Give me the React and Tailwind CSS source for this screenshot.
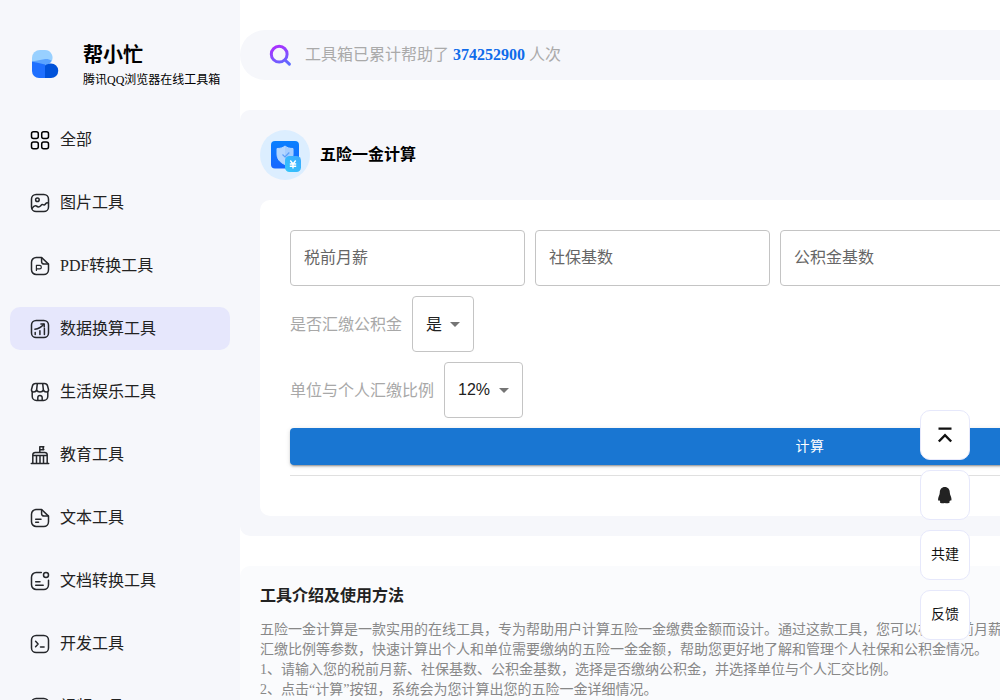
import React from "react";

const stroke = {
  width: 20,
  height: 20,
  viewBox: "0 0 20 20",
  fill: "none",
  stroke: "#25272b",
  strokeWidth: 1.5,
  strokeLinecap: "round",
  strokeLinejoin: "round",
};

const icons = {
  all: (
    <svg {...stroke} stroke="#000">
      <rect x="1.500" y="1.800" width="6.800" height="6.800" rx="2" />
      <rect x="11.700" y="1.800" width="6.800" height="6.800" rx="2" />
      <rect x="1.500" y="12" width="6.800" height="6.800" rx="2" />
      <rect x="11.700" y="12" width="6.800" height="6.800" rx="2" />
    </svg>
  ),
  image: (
    <svg {...stroke}>
      <rect x="1.500" y="1.500" width="17" height="17" rx="4.600" />
      <circle cx="7.400" cy="6.700" r="1.800" />
      <path d="M2 15.500c1.500-2.300 2.900-3.200 4.200-2.600 1.500 1.300 3 1.600 4.500-.1 1-1.600 1.900-1.600 2.900-.9 1 .4 1.400-.3 2-1.100.7-.9 1.700-1.200 2.800-.7" />
    </svg>
  ),
  pdf: (
    <svg {...stroke}>
      <path d="M11.600 1.500H6.200a4.700 4.700 0 0 0-4.700 4.700v7.600a4.700 4.700 0 0 0 4.700 4.700h7.600a4.700 4.700 0 0 0 4.700-4.700V8.100z" />
      <path d="M11.600 1.800v3.900a2.400 2.400 0 0 0 2.400 2.400h4.200" />
      <path d="M6.400 14.500V9.400h3.200a1.750 1.750 0 0 1 0 3.500H6.500" strokeWidth="1.200" />
    </svg>
  ),
  data: (
    <svg {...stroke}>
      <rect x="1.500" y="1.500" width="17" height="17" rx="4.600" />
      <path d="M5.200 15.500v-2M9.900 15.500v-3.700M14.400 15.500V9.400M4.900 10.200c3.800-.3 6.300-2 8.800-5" />
      <path d="M10.900 5h3.300v3" />
    </svg>
  ),
  life: (
    <svg {...stroke}>
      <path d="M2.200 9.500v4.700a4.300 4.300 0 0 0 4.300 4.300h7a4.300 4.300 0 0 0 4.300-4.300V9.500" />
      <path d="M5.500 1.500h9c1.500 0 2.600.8 3 2.300l1 3.700c.3 1.600-.7 2.500-2.200 2.500-1.400 0-2.400-.7-2.900-1.900-.6 1.200-1.700 1.900-3.400 1.900s-2.800-.7-3.400-1.900C6.100 9.300 5.100 10 3.700 10c-1.500 0-2.500-.9-2.200-2.500l1-3.700c.4-1.500 1.500-2.300 3-2.300z" />
      <path d="m7.300 1.700-.7 6.400M12.700 1.700l.7 6.400M7.800 18.200v-2.500a2.200 2.200 0 0 1 4.400 0v2.500" />
    </svg>
  ),
  education: (
    <svg {...stroke}>
      <path d="M1.300 18.500h17.400M2.800 18V9.800a2.400 2.400 0 0 1 2.400-2.400h9.600a2.400 2.400 0 0 1 2.400 2.400V18M3 10.500h14M6.500 10.500v7.700M10 10.500v7.700M13.500 10.500v7.700" />
      <path d="M9.800 7V1.700h4l-.8 1.500.8 1.500H10" />
    </svg>
  ),
  text: (
    <svg {...stroke}>
      <path d="M11.600 1.500H6.200a4.700 4.700 0 0 0-4.700 4.700v7.600a4.700 4.700 0 0 0 4.700 4.700h7.600a4.700 4.700 0 0 0 4.700-4.700V8.100z" />
      <path d="M11.600 1.800v3.900a2.400 2.400 0 0 0 2.400 2.400h4.200M5.700 11.200H11M5.700 14.300h2.800" />
    </svg>
  ),
  document: (
    <svg {...stroke}>
      <path d="M11.300 1.500H6.200a4.700 4.700 0 0 0-4.700 4.700v7.600a4.700 4.700 0 0 0 4.700 4.700h7.600a4.700 4.700 0 0 0 4.700-4.700V9.200" />
      <circle cx="16" cy="4" r="2.500" />
      <path d="M5.700 10.700H10M5.700 14.200h7.500" />
    </svg>
  ),
  dev: (
    <svg {...stroke}>
      <rect x="1.500" y="1.500" width="17" height="17" rx="4.600" />
      <path d="m5.600 7.300 2.500 2.700-2.500 2.700M10.500 12.900h3.600" />
    </svg>
  ),
  video: (
    <svg {...stroke}>
      <rect x="1.500" y="1.500" width="17" height="17" rx="4.600" />
      <path d="m8 7 5 3-5 3z" />
    </svg>
  ),
};

const menu = [
  ["all", "全部"],
  ["image", "图片工具"],
  ["pdf", "PDF转换工具"],
  ["data", "数据换算工具"],
  ["life", "生活娱乐工具"],
  ["education", "教育工具"],
  ["text", "文本工具"],
  ["document", "文档转换工具"],
  ["dev", "开发工具"],
  ["video", "视频工具"],
];

function Logo() {
  return (
    <svg width="28" height="30" viewBox="0 0 28 30">
      <path d="M1 13V9a8 8 0 0 1 8-8h5a7.600 7.600 0 0 1 6 12.200L14 16z" fill="#98d0ff" />
      <path d="M1 12.600 13 10.200c3-.5 5.400 0 7.600 1.600-1.200 2.200-3 3.200-6.600 5.200z" fill="#5ba4ff" />
      <path d="M1 12.600 14 15.500V29H8a7 7 0 0 1-7-7z" fill="#1f70ff" />
      <path d="M14 16.500c2-1.500 4-2 6-2a7.200 7.200 0 0 1 0 14.500h-6z" fill="#0052d9" />
    </svg>
  );
}

function Sidebar() {
  return (
    <aside className="flex h-[700px] w-60 shrink-0 flex-col overflow-hidden bg-[#f6f7fb]">
      <div className="flex h-[118px] shrink-0 pl-[31px] pt-10">
        <div className="w-[52px] pt-[9px]">
          <Logo />
        </div>
        <div className="whitespace-nowrap pt-px text-black">
          <div className="text-[20px] font-bold leading-[29px]">帮小忙</div>
          <div className="text-[12px] leading-[20px]">腾讯QQ浏览器在线工具箱</div>
        </div>
      </div>
      <nav className="flex flex-col gap-5 px-2.5">
        {menu.map(([key, label]) => (
          <div
            key={key}
            className={
              "flex h-[43px] shrink-0 items-center gap-2.5 rounded-[10px] pl-5 text-[16px] text-[#222] " +
              (key === "data" ? "bg-[#e6e7fc]" : "")
            }
          >
            <span className="flex h-[21px] items-end">{icons[key]}</span>
            <span className="leading-6">{label}</span>
          </div>
        ))}
      </nav>
    </aside>
  );
}

function SearchBar() {
  return (
    <div className="flex h-[50px] items-center rounded-full bg-[#f6f7fb] pl-[29px] text-[16px] text-[#aaa]">
      <svg width="24" height="24" viewBox="0 0 24 24" fill="none">
        <defs>
          <linearGradient id="lens" x1="8" y1="1" x2="16" y2="23" gradientUnits="userSpaceOnUse">
            <stop stopColor="#b02cff" />
            <stop offset="1" stopColor="#5b6cff" />
          </linearGradient>
        </defs>
        <circle cx="10.200" cy="11.200" r="7.900" stroke="url(#lens)" strokeWidth="3" />
        <path d="m16 17 4.400 4.200" stroke="url(#lens)" strokeWidth="3" strokeLinecap="round" />
      </svg>
      <div className="ml-3 whitespace-nowrap">
        工具箱已累计帮助了 <b className="font-bold text-[#0f6bea]">374252900</b> 人次
      </div>
    </div>
  );
}

function ToolIcon() {
  return (
    <svg width="50" height="50" viewBox="0 0 50 50">
      <defs>
        <linearGradient id="tile" x1="0" y1="0" x2="0" y2="1">
          <stop stopColor="#0a80ff" />
          <stop offset="1" stopColor="#1766ff" />
        </linearGradient>
        <linearGradient id="coin" x1="1" y1="0" x2="0" y2="1">
          <stop stopColor="#3aa8ff" />
          <stop offset="1" stopColor="#35c7fa" />
        </linearGradient>
      </defs>
      <circle cx="25" cy="25" r="25" fill="#dceeff" />
      <rect x="11" y="11" width="28" height="27.500" rx="4" fill="url(#tile)" />
      <path d="M25 16c2 1.700 4.500 2.500 8 2.500v5.500c0 5-3 8.500-8 10.500-5-2-8-5.500-8-10.500v-5.500c3.500 0 6-.8 8-2.500z" fill="#b5d7ff" stroke="#b5d7ff" strokeLinejoin="round" />
      <path d="M25 16c2 1.700 4.500 2.500 8 2.500v5.500c0 5-3 8.500-8 10.500z" fill="#a4cdff" />
      <path d="m22.500 24.500 2.500 2.500 4.300-4.500" fill="none" stroke="#5c9ff8" strokeWidth="1.200" />
      <rect x="25" y="26" width="16" height="16" rx="4.500" fill="url(#coin)" />
      <path d="m30.300 30.500 2.700 3.500 2.700-3.500M29.800 34h6.400M29.800 36.300h6.400M33 34v4.500" fill="none" stroke="#fff" strokeWidth="1.400" />
    </svg>
  );
}

function Select({ value, width, textClass = "" }) {
  return (
    <div className={"flex h-14 items-center rounded-[4px] border border-[#c4c4c4] pl-[13px] font-['Liberation_Sans','Noto_Sans_CJK_SC',sans-serif] text-[16px] text-[#212121] " + width}>
      <span className={"leading-6 " + textClass}>{value}</span>
      <svg className="ml-auto mr-[6px]" width="24" height="24" viewBox="0 0 24 24">
        <path d="m7 10 5 5 5-5z" fill="#757575" />
      </svg>
    </div>
  );
}

function Calculator() {
  return (
    <section className="mt-[30px] rounded-[10px] bg-[#f6f7fb] p-5">
      <div className="flex h-[50px] items-center gap-2.5">
        <ToolIcon />
        <h1 className="text-[16px] font-bold text-black">五险一金计算</h1>
      </div>
      <div className="mt-5 flex h-[316px] flex-col gap-2.5 rounded-[10px] bg-white p-[30px]">
        <div className="flex gap-2.5">
          {["税前月薪", "社保基数", "公积金基数"].map((label) => (
            <div
              key={label}
              className="flex h-14 w-[235px] items-center rounded-[4px] border border-[#c4c4c4] pl-[13px] text-[16px] text-[#666]"
            >
              <span className="leading-6">{label}</span>
            </div>
          ))}
        </div>
        <div className="flex items-center gap-2.5 text-[16px] text-[#a8a8a8]">
          <span className="pt-0.5">是否汇缴公积金</span>
          <Select value="是" width="w-[62px]" textClass="pt-0.5" />
        </div>
        <div className="flex items-center gap-2.5 text-[16px] text-[#a8a8a8]">
          <span className="pt-0.5">单位与个人汇缴比例</span>
          <Select value="12%" width="w-[79px]" />
        </div>
        <button className="h-[37px] shrink-0 rounded-[4px] bg-[#1976d2] text-[14px] font-normal tracking-[0.4px] text-white shadow-[0_3px_1px_-2px_rgba(0,0,0,0.2),0_2px_2px_0_rgba(0,0,0,0.14),0_1px_5px_0_rgba(0,0,0,0.12)]">
          计算
        </button>
        <hr className="border-t border-[#e0e0e0]" />
      </div>
    </section>
  );
}

function Intro() {
  return (
    <section className="mt-[30px] h-[170px] rounded-[10px] bg-[#fafbfd] px-5 pt-[18px]">
      <h2 className="text-[16px] font-bold leading-6 text-[#222]">工具介绍及使用方法</h2>
      <div className="mt-3 whitespace-nowrap text-[14px] leading-5 text-[#888]">
        <p>
          五险一金计算是一款实用的在线工具，专为帮助用户计算五险一金缴费金额而设计。通过这款工具，您可以根据税前月薪、社保基数、公积金基数、是否汇缴公积金、单位与个人
          <br />
          汇缴比例等参数，快速计算出个人和单位需要缴纳的五险一金金额，帮助您更好地了解和管理个人社保和公积金情况。
        </p>
        <p>1、请输入您的税前月薪、社保基数、公积金基数，选择是否缴纳公积金，并选择单位与个人汇交比例。</p>
        <p>2、点击“计算”按钮，系统会为您计算出您的五险一金详细情况。</p>
      </div>
    </section>
  );
}

function FloatingActions() {
  const tile =
    "flex h-[50px] w-[50px] items-center justify-center rounded-[10px] border border-[#e6e8fb] bg-white text-[14px] text-[#111]";
  return (
    <div className="absolute left-[920px] top-[410px] flex flex-col gap-2.5">
      <div className={tile}>
        <svg width="24" height="24" viewBox="0 0 24 24" fill="none" stroke="#111" strokeWidth="2.400">
          <path d="M5.500 5.600h13M5.800 18.500l6.200-6.400 6.200 6.400" />
        </svg>
      </div>
      <div className={tile}>
        <svg width="24" height="24" viewBox="0 0 24 24">
          <path
            d="M11.800 4C8.600 4 6.800 6.400 6.800 9.500c0 1.200-.4 2.100-.9 3.400-.7 1.700-1 3.300-.7 4.300.2.700.8.600 1.300 0 .1.500.4 1 .8 1.500-.5.400-.4 1.100.4 1.200 1.300.3 2.700.3 4.100 0 1.400.3 2.800.3 4.100 0 .8-.1.900-.8.400-1.200.4-.5.700-1 .8-1.500.5.600 1.100.7 1.300 0 .3-1 0-2.600-.7-4.300-.5-1.300-.9-2.200-.9-3.400C16.800 6.400 15 4 11.800 4z"
            fill="#222"
          />
        </svg>
      </div>
      <div className={tile}>
        <span className="pb-0.5">共建</span>
      </div>
      <div className={tile}>
        <span className="pb-0.5">反馈</span>
      </div>
    </div>
  );
}

export default function App() {
  return (
    <div className="relative flex h-[700px] w-full overflow-hidden bg-white font-['Liberation_Serif','Noto_Sans_CJK_SC',serif]">
      <Sidebar />
      <main className="w-[1140px] shrink-0 pt-[30px]">
        <SearchBar />
        <Calculator />
        <Intro />
      </main>
      <FloatingActions />
    </div>
  );
}
